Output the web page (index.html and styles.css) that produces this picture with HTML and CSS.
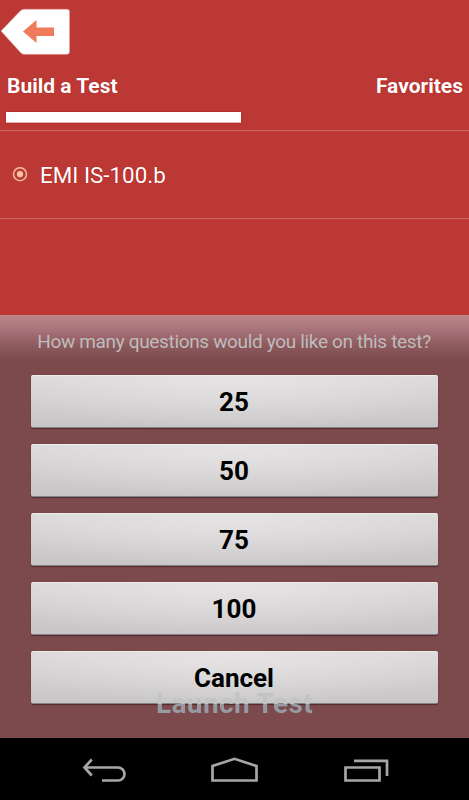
FILE: index.html
```html
<!DOCTYPE html>
<html lang="en">
<head>
<meta charset="utf-8">
<title>Build a Test</title>
<link rel="stylesheet" href="styles.css">
</head>
<body>
<div class="screen">
  <header class="header">
    <svg class="back" width="70" height="64" viewBox="0 0 70 64">
      <path d="M1 31 20.500 10.800Q22 9.300 24 9.300H67Q69.500 9.300 69.500 11.500V52Q69.500 54.300 67 54.300H24Q22 54.300 20.500 52.500Z" fill="#fff" stroke="#e3a6a3" stroke-width=".6"/>
      <path d="M23 31.500 36.500 20V27.500H54V36H36.500V43Z" fill="#ef7b5b"/>
    </svg>
    <div class="tabs"><span class="tab-build">Build a Test</span><span class="tab-fav">Favorites</span></div>
    <div class="indicator"></div>
  </header>
  <div class="row">
    <svg class="radio" width="16" height="16" viewBox="0 0 16 16"><circle cx="8" cy="7.200" r="6.500" fill="none" stroke="#f5b797" stroke-width="1.600"/><circle cx="8" cy="7.200" r="3.100" fill="#f5c3a7"/></svg>
    <span class="course">EMI IS-100.b</span>
  </div>
  <div class="space"></div>
  <section class="sheet">
    <p class="question">How many questions would you like on this test?</p>
    <div class="choices">
      <button>25</button>
      <button>50</button>
      <button>75</button>
      <button>100</button>
      <button>Cancel</button>
    </div>
    <div class="launch">Launch Test</div>
  </section>
  <nav class="nav">
    <svg width="469" height="62" viewBox="0 738 469 62" fill="none" stroke="#a6a6a6" stroke-width="2.700">
      <path d="M84.500 767.500H118A6.500 6.500 0 0 1 118 780.500H102M91.800 759.500 84.500 767.500 91.800 775.500"/>
      <path d="M212.500 780.500V766L234.500 758.800 256.500 766V780.500Z"/>
      <path d="M345.500 767.500H379.500V780.500H345.500ZM354 760.800H387V776"/>
    </svg>
  </nav>
</div>
</body>
</html>
```

FILE: styles.css
```css
* { box-sizing: border-box; }
body { margin: 0; background: #000; font-family: Roboto, sans-serif; }
.screen { width: 469px; height: 800px; display: flex; flex-direction: column; background: #bc3834; overflow: hidden; }
.header { height: 131px; border-bottom: 1px solid #cb6663; color: #fff; }
.back { display: block; }
.tabs { height: 48px; padding: 9px 6px 0 7px; display: flex; justify-content: space-between; font-size: 21px; font-weight: 700; line-height: 26px; text-shadow: 0 0 1px #a90c0c; white-space: nowrap; }
.indicator { width: 235px; height: 11px; margin-left: 6px; background: #fff; border-bottom: 1px solid #e5b4b1; box-shadow: 0 0 1px #a00000; }
.row { height: 88px; display: flex; align-items: center; padding-left: 12px; border-bottom: 1px solid #cb6663; }
.radio { margin-right: 12px; }
.course { padding-top: 1px; color: #fff; font-size: 22.4px; line-height: 28px; text-shadow: 0 0 1px #a90c0c; white-space: nowrap; }
.space { height: 96px; }
.sheet { position: relative; height: 423px; padding: 13px 31px 0; background: linear-gradient(#bc858a 0, #a9747a 14px, #8c595c 31px, #7c494c 46px, #7c494c 100%); }
.question { margin: 0 1px 0 0; height: 47px; color: #bebcbc; font-size: 19px; line-height: 28px; letter-spacing: -.34px; text-align: center; white-space: nowrap; }
.choices { display: flex; flex-direction: column; gap: 16px; }
button { width: 407px; height: 53px; padding: 0 1px 0 0; border: 0; border-top: 1px solid #eeeced; border-bottom: 1px solid #858384; border-radius: 2px; color: #000; background: radial-gradient(ellipse 260px 54px at 50% 0, #e5e3e4, rgba(222, 220, 221, 0)), linear-gradient(#dad8d9, #c7c5c6); box-shadow: 0 1px 1px #522c2f, 0 0 1px #643a3d; font: 700 26px/30px Roboto, sans-serif; }
.launch { position: absolute; left: 0; top: 371px; width: 469px; text-align: center; color: transparent; background: linear-gradient(#c1c3c5 18px, #969aa2 18px); -webkit-background-clip: text; background-clip: text; font-size: 28px; font-weight: 700; line-height: 36px; letter-spacing: .35px; white-space: nowrap; }
.nav { height: 62px; background: #000; }
.nav svg { display: block; }
```
